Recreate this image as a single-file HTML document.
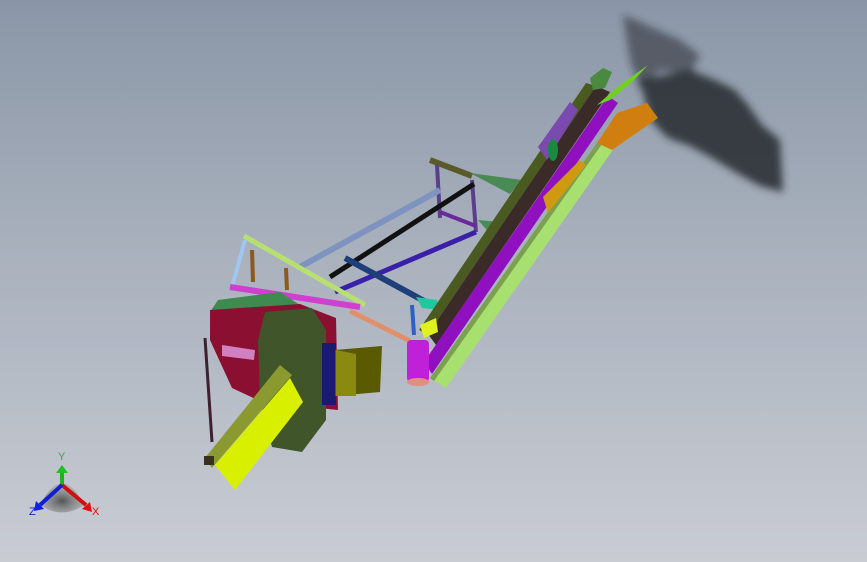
<!DOCTYPE html>
<html><head><meta charset="utf-8"><style>
html,body{margin:0;padding:0;width:867px;height:562px;overflow:hidden}
body{background:linear-gradient(180deg,#8a96a7 0%,#a9b1bd 45%,#c9ccd3 100%)}
svg{position:absolute;left:0;top:0}
</style></head><body>
<svg width="867" height="562" viewBox="0 0 867 562" xmlns="http://www.w3.org/2000/svg">
<defs><filter id="b" x="-20%" y="-20%" width="140%" height="140%"><feGaussianBlur stdDeviation="4"/></filter>
<radialGradient id="cone" cx="50%" cy="60%" r="50%"><stop offset="0" stop-color="#555"/><stop offset="1" stop-color="#999" stop-opacity="0.6"/></radialGradient></defs>
<!-- shadow -->
<g filter="url(#b)" fill="#25282e">
<polygon opacity="0.55" points="623,15 640,22 680,40 700,55 690,75 660,70 640,90 630,60"/>
<polygon opacity="0.85" points="640,80 690,70 715,80 735,90 748,105 762,125 780,140 783,192 760,186 735,172 712,158 690,146 668,138 652,122 645,100"/>
</g>
<!-- frame -->
<line x1="430" y1="160" x2="472" y2="176" stroke="#5a5a2a" stroke-width="6"/>
<polygon points="470,173 522,180 510,194" fill="#4a8a55"/>
<line x1="437" y1="165" x2="440" y2="218" stroke="#5b3e8c" stroke-width="4"/>
<line x1="472" y1="180" x2="476" y2="232" stroke="#5b3e8c" stroke-width="4"/>
<line x1="440" y1="212" x2="476" y2="226" stroke="#6a2a9a" stroke-width="4"/>
<polygon points="478,220 500,222 492,236" fill="#4a8a55"/>
<line x1="298" y1="268" x2="440" y2="190" stroke="#7f93c0" stroke-width="6"/>
<line x1="330" y1="277" x2="474" y2="184" stroke="#111" stroke-width="5"/>
<line x1="335" y1="292" x2="476" y2="232" stroke="#3a1fa8" stroke-width="5"/>
<line x1="345" y1="258" x2="426" y2="302" stroke="#1f3f7a" stroke-width="6"/>
<polygon points="416,297 437,300 440,310 422,308" fill="#20c8a0"/>
<line x1="412" y1="305" x2="414" y2="335" stroke="#3060c0" stroke-width="4"/>
<line x1="350" y1="311" x2="410" y2="341" stroke="#e0906a" stroke-width="5"/>
<line x1="245" y1="240" x2="232" y2="287" stroke="#9fc8f0" stroke-width="4"/>
<line x1="252" y1="250" x2="253" y2="282" stroke="#8a5a20" stroke-width="4"/>
<line x1="286" y1="268" x2="287" y2="290" stroke="#8a5a20" stroke-width="4"/>
<line x1="244" y1="236" x2="365" y2="305" stroke="#b8e070" stroke-width="5"/>
<line x1="230" y1="287" x2="360" y2="307" stroke="#d040d0" stroke-width="6"/>
<!-- hopper -->
<polygon points="218,300 280,292 300,305 210,312" fill="#3f8a4e"/>
<polygon points="210,310 300,304 336,318 338,410 262,402 232,388 210,340" fill="#8a0f30"/>
<polygon points="265,312 312,308 326,330 326,420 302,452 272,447 260,400 258,340" fill="#41552a"/>
<polygon points="322,343 336,343 336,405 322,405" fill="#1a1a70"/>
<polygon points="335,350 382,346 380,392 335,396" fill="#5a5a00"/>
<polygon points="336,350 356,354 356,396 336,396" fill="#8a8a10"/>
<polygon points="222,345 255,350 254,360 222,356" fill="#d080c0"/>
<line x1="205" y1="338" x2="212" y2="442" stroke="#402030" stroke-width="3"/>
<polygon points="215,465 290,378 303,402 235,490" fill="#d8f000"/>
<polygon points="205,458 280,365 292,375 212,468" fill="#8a9a30"/>
<rect x="204" y="456" width="10" height="9" fill="#3a3020"/>
<!-- conveyor -->
<polygon points="586,83 596,86 428,334 419,330" fill="#4a5a20"/>
<polygon points="596,86 610,92 436,345 428,334" fill="#3a2a28"/>
<polygon points="608,96 618,103 432,374 424,362" fill="#9010c0"/>
<polygon points="597,143 615,147 446,388 430,378" fill="#a8e070"/>
<polygon points="597,143 602,144 434,381 430,378" fill="#7aa050"/>
<polygon points="597,143 617,113 647,103 658,118 612,150" fill="#d07e10"/>
<polygon points="543,197 548,213 586,165 580,160" fill="#d09a10"/>
<polygon points="538,147 570,102 578,110 547,160" fill="#7a4ab0"/>
<ellipse cx="553" cy="150" rx="5" ry="11" fill="#1a8a40"/>
<polygon points="597,105 620,85 648,65 632,82 610,100" fill="#70d020"/>
<polygon points="590,78 603,68 612,72 605,88 593,90" fill="#4a8a40"/>
<rect x="407" y="340" width="22" height="42" rx="4" fill="#c020d8"/>
<ellipse cx="418" cy="382" rx="11" ry="4" fill="#e09080"/>
<polygon points="420,325 436,318 438,332 424,338" fill="#e0f020"/>
<!-- triad -->
<path d="M40,505 Q62,462 84,505 Q62,520 40,505Z" fill="url(#cone)"/>
<line x1="62" y1="485" x2="62" y2="472" stroke="#20b020" stroke-width="4"/>
<polygon points="56,473 62,465 68,473" fill="#20c020"/>
<line x1="62" y1="485" x2="86" y2="505" stroke="#d01010" stroke-width="4"/>
<polygon points="82,509 92,512 90,502" fill="#e01010"/>
<line x1="62" y1="485" x2="40" y2="505" stroke="#1020d0" stroke-width="4"/>
<polygon points="34,511 44,509 36,501" fill="#1020e0"/>
<text x="58" y="460" font-family="Liberation Sans,sans-serif" font-size="11" fill="#20c020">Y</text>
<text x="92" y="515" font-family="Liberation Sans,sans-serif" font-size="11" fill="#e01010">X</text>
<text x="29" y="515" font-family="Liberation Sans,sans-serif" font-size="11" fill="#1020e0">Z</text>
</svg>
</body></html>
